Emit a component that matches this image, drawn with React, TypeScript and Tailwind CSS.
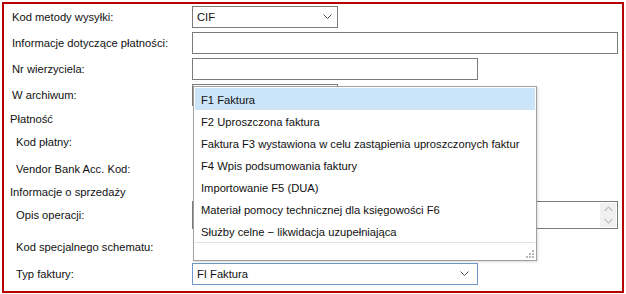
import { ReactNode } from 'react'

const font = { fontFamily: '"Liberation Sans", Arial, sans-serif' }

const Chevron = () => (
  <svg width="9" height="6" viewBox="0 0 9 6" className="text-[#555]">
    <polyline points="0.5,0.5 4.5,4.5 8.5,0.5" fill="none" stroke="currentColor" strokeWidth="1" />
  </svg>
)

const options = [
  'F1 Faktura',
  'F2 Uproszczona faktura',
  'Faktura F3 wystawiona w celu zastąpienia uproszczonych faktur',
  'F4 Wpis podsumowania faktury',
  'Importowanie F5 (DUA)',
  'Materiał pomocy technicznej dla księgowości F6',
  'Służby celne − likwidacja uzupełniająca',
]

const Row = ({ label, indent, className, children }: { label: string; indent?: 'head' | 'sub'; className: string; children?: ReactNode }) => (
  <div className={`flex items-center ${className}`}>
    <span className={`w-[192px] shrink-0 whitespace-nowrap ${indent === 'head' ? 'pl-[10px]' : indent === 'sub' ? 'pl-[16px]' : 'pl-[12px]'}`}>{label}</span>
    {children}
  </div>
)

const App = () => {
  return (
    <div className="relative h-[294px] w-[626px] overflow-hidden bg-white text-[11.2px] text-[#111]" style={font}>
      <div className="absolute left-[2px] top-[2px] h-[291px] w-[622px] border-2 border-[#b80000]" />

      <div className="flex flex-col pt-[6px]">
        <Row label="Kod metody wysyłki:" className="h-[22px]">
          <div className="flex h-[22px] w-[146px] items-center justify-between border border-[#7a7a7a] pl-[4px] pr-[5px]">
            <span>CIF</span>
            <Chevron />
          </div>
        </Row>
        <Row label="Informacje dotyczące płatności:" className="mt-[4px] h-[22px]">
          <div className="h-[22px] w-[426px] border border-[#7a7a7a]" />
        </Row>
        <Row label="Nr wierzyciela:" className="mt-[4px] h-[22px]">
          <div className="h-[22px] w-[286px] border border-[#7a7a7a]" />
        </Row>
        <Row label="W archiwum:" className="mt-[4px] h-[22px]">
          <div className="h-[22px] w-[146px] border border-[#7a7a7a]" />
        </Row>
        <Row label="Płatność" indent="head" className="mt-[2px] h-[22px]" />
        <Row label="Kod płatny:" indent="sub" className="h-[24px]" />
        <Row label="Vendor Bank Acc. Kod:" indent="sub" className="h-[30px]" />
        <Row label="Informacje o sprzedaży" indent="head" className="h-[17px]" />
        <Row label="Opis operacji:" indent="sub" className="h-[28px]">
          <div className="flex h-[28px] w-[426px] justify-end border border-[#7a7a7a] p-[1px]">
            <div className="flex w-[16px] flex-col items-center justify-around bg-[#f0f0f0] text-[#c0c0c0]">
              <svg width="9" height="6" viewBox="0 0 9 6">
                <polyline points="0.5,5 4.5,1 8.5,5" fill="none" stroke="currentColor" strokeWidth="1.2" />
              </svg>
              <svg width="9" height="6" viewBox="0 0 9 6">
                <polyline points="0.5,1 4.5,5 8.5,1" fill="none" stroke="currentColor" strokeWidth="1.2" />
              </svg>
            </div>
          </div>
        </Row>
        <Row label="Kod specjalnego schematu:" indent="sub" className="mt-[3px] h-[30px]" />
        <Row label="Typ faktury:" indent="sub" className="mt-[1px] h-[22px]">
          <div className="flex h-[22px] w-[286px] items-center justify-between border border-[#6f98c8] pl-[4px] pr-[8px]">
            <span>FI Faktura</span>
            <Chevron />
          </div>
        </Row>
      </div>

      <div className="absolute left-[193px] top-[86px] flex h-[175px] w-[344px] flex-col border border-[#a0a0a0] bg-white p-[1px] shadow-[1px_1px_2px_rgba(0,0,0,0.15)]">
        {options.map((o, i) => (
          <div key={o} className={`flex h-[22px] shrink-0 items-center whitespace-nowrap pl-[6px] pt-[2px] ${i === 0 ? 'bg-[#cce4f7]' : ''}`}>
            {o}
          </div>
        ))}
        <div className="relative flex-1 border-t border-[#e0e0e0]">
          <svg className="absolute bottom-[1px] right-[1px]" width="8" height="8" viewBox="0 0 8 8">
            {[
              [6, 0],
              [6, 3],
              [3, 3],
              [6, 6],
              [3, 6],
              [0, 6],
            ].map(([x, y]) => (
              <rect key={`${x}-${y}`} x={x} y={y} width="2" height="2" fill="#b8b8b8" />
            ))}
          </svg>
        </div>
      </div>
    </div>
  )
}

export default App
